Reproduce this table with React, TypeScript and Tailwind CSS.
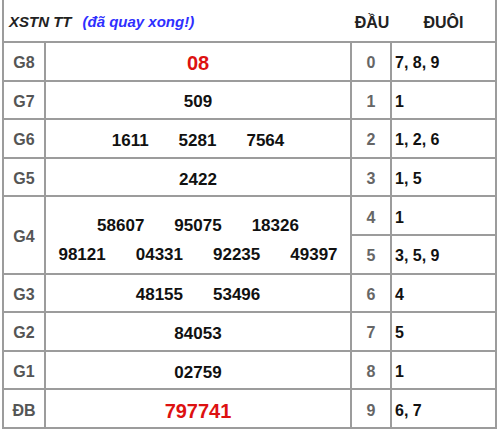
import React from 'react'

interface Row {
  label?: string
  nums?: string[][]
  red?: boolean
  span?: boolean
  head: string
  tail: string
}

const rows: Row[] = [
  { label: 'G8', nums: [['08']], red: true, head: '0', tail: '7, 8, 9' },
  { label: 'G7', nums: [['509']], head: '1', tail: '1' },
  { label: 'G6', nums: [['1611', '5281', '7564']], head: '2', tail: '1, 2, 6' },
  { label: 'G5', nums: [['2422']], head: '3', tail: '1, 5' },
  {
    label: 'G4',
    nums: [
      ['58607', '95075', '18326'],
      ['98121', '04331', '92235', '49397'],
    ],
    span: true,
    head: '4',
    tail: '1',
  },
  { head: '5', tail: '3, 5, 9' },
  { label: 'G3', nums: [['48155', '53496']], head: '6', tail: '4' },
  { label: 'G2', nums: [['84053']], head: '7', tail: '5' },
  { label: 'G1', nums: [['02759']], head: '8', tail: '1' },
  { label: 'ĐB', nums: [['797741']], red: true, head: '9', tail: '6, 7' },
]

export default function App() {
  return (
    <div className="w-[500px] h-[432px] bg-white overflow-hidden font-['Liberation_Sans',Arial,sans-serif]">
      <div className="ml-[2px] w-[495px] border-x-2 border-b-2 border-[#9c9c9c]">
        {/* Header */}
        <div className="h-[43px] flex items-center border-b-2 border-[#9c9c9c] pt-[4px]">
          <div className="w-[348px] pl-[5px] italic font-bold text-[15px] text-[#222]">
            XSTN TT
            <span className="ml-[11px] text-[#2f2fff]">(đã quay xong!)</span>
          </div>
          <div className="w-[40px] text-center font-bold text-[16px] text-[#222]">ĐẦU</div>
          <div className="flex-1 text-center font-bold text-[16px] text-[#222]">ĐUÔI</div>
        </div>

        {/* Body */}
        <div className="grid grid-cols-[40px_304px_38px_1fr] grid-rows-[repeat(10,36.6px)] gap-[2px] bg-[#9c9c9c]">
          {rows.map((r, i) => (
            <React.Fragment key={i}>
              {r.label && (
                <div
                  className={`bg-white flex items-center justify-center pt-[4px] font-bold text-[16px] text-[#555] ${
                    r.span ? 'row-span-2' : ''
                  }`}
                >
                  {r.label}
                </div>
              )}
              {r.nums && (
                <div
                  className={`bg-white flex flex-col items-center justify-center ${
                    r.span ? 'row-span-2 gap-[12px] pt-[10px]' : 'pt-[4px]'
                  }`}
                >
                  {r.nums.map((line, j) => (
                    <div key={j} className="flex gap-[30px]">
                      {line.map(n => (
                        <span
                          key={n}
                          className={
                            r.red
                              ? 'text-[20px] font-bold text-[#dd1111] leading-none'
                              : 'text-[17px] font-bold text-[#111] leading-none'
                          }
                        >
                          {n}
                        </span>
                      ))}
                    </div>
                  ))}
                </div>
              )}
              <div className="bg-white flex items-center justify-center pt-[4px] font-bold text-[16px] text-[#666]">
                {r.head}
              </div>
              <div className="bg-white flex items-center pl-[3px] pt-[4px] font-bold text-[16px] text-[#111]">
                {r.tail}
              </div>
            </React.Fragment>
          ))}
        </div>
      </div>
    </div>
  )
}
